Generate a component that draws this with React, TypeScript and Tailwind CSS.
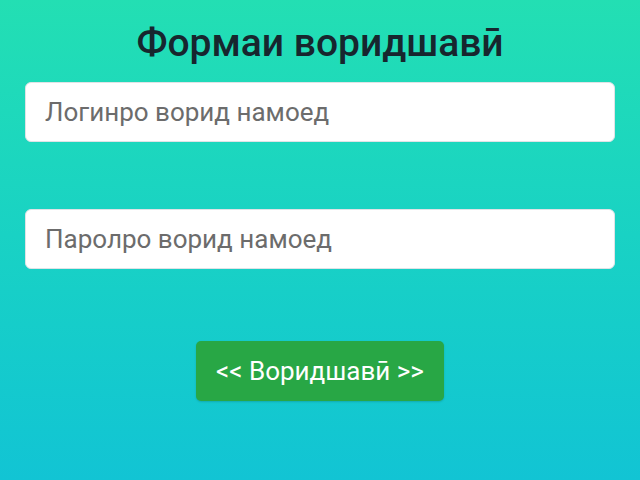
export default function App() {
  return (
    <main
      className="w-[640px] h-[480px] overflow-hidden bg-gradient-to-b from-[#23dfb3] to-[#12c4d4] px-[25px] flex flex-col"
      style={{ fontFamily: 'Roboto, "Noto Sans", sans-serif' }}
    >
      <h1 className="text-center text-[39px] leading-none font-medium text-[#17262e] mt-[24px] mb-[19px]">
        Формаи воридшавӣ
      </h1>

      <input
        type="text"
        placeholder="Логинро ворид намоед"
        className="h-[60px] w-full rounded-[6px] border border-[#dfe3e6] bg-white px-[19px] text-[26px] text-[#495057] placeholder:text-[#6c6c6c] outline-none"
      />

      <input
        type="password"
        placeholder="Паролро ворид намоед"
        className="mt-[67px] h-[60px] w-full rounded-[6px] border border-[#dfe3e6] bg-white px-[19px] text-[26px] text-[#495057] placeholder:text-[#6c6c6c] outline-none"
      />

      <div className="mt-[72px] flex justify-center">
        <button
          type="button"
          className="h-[60px] w-[248px] rounded-[5px] bg-[#28a745] text-[26px] text-white shadow-[0_1px_2px_rgba(0,0,0,0.15)]"
        >
          {'<< Воридшавӣ >>'}
        </button>
      </div>
    </main>
  );
}
